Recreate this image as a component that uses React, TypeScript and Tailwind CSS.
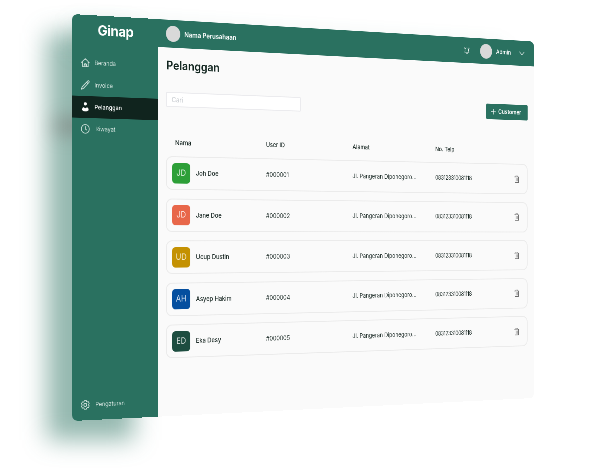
import type { ReactNode } from "react";

function HomeIcon() {
  return (
    <svg viewBox="0 0 24 24" className="h-[20px] w-[20px]" fill="none" stroke="currentColor" strokeWidth="1.9" strokeLinejoin="round" strokeLinecap="round">
      <path d="M1.500 12 12 2.500 22.500 12M4.500 10V21.500h15V10M9 21v-3.500a3 3 0 0 1 6 0V21M9 17.500h6" />
    </svg>
  );
}

function PencilIcon() {
  return (
    <svg viewBox="0 0 24 24" className="h-[20px] w-[20px]" fill="none" stroke="currentColor" strokeWidth="2" strokeLinejoin="round" strokeLinecap="round">
      <path d="M1.500 22.500l2-5.500L18.500 2c1-1 2.200-.7 3 .1.900.9 1 2 .1 3L7 20.500zM15.500 5l3.500 3.500" />
    </svg>
  );
}

function PersonIcon() {
  return (
    <svg viewBox="0 0 24 24" className="h-[20px] w-[20px]" fill="currentColor">
      <circle cx="12" cy="4.500" r="3.800" />
      <path d="M3.500 18.500c0-3.500 2-5.500 4.500-6 1.200 1.600 2.500 2.200 4 2.200s2.800-.6 4-2.200c2.500.5 4.500 2.500 4.500 6 0 2.500-3.500 4-8.500 4s-8.500-1.500-8.500-4z" />
    </svg>
  );
}

function ClockIcon() {
  return (
    <svg viewBox="0 0 24 24" className="h-[20px] w-[20px]" fill="none" stroke="currentColor" strokeWidth="1.9" strokeLinecap="round" strokeLinejoin="round">
      <circle cx="12" cy="12" r="10.500" />
      <path d="M12 6v6.500l3.500 2" />
    </svg>
  );
}

function GearIcon() {
  return (
    <svg viewBox="0 0 24 24" className="h-[20px] w-[20px]" fill="none" stroke="currentColor" strokeWidth="1.900" strokeLinejoin="round">
      <path d="M9.500 1.500h5l.8 2.600 2 1.100 2.600-.6 2.300 4.600-1.800 2v1.600l1.800 2-2.300 4.600-2.600-.6-2 1.100-.8 2.600h-5l-.8-2.600-2-1.100-2.600.6-2.300-4.600 1.800-2v-1.600l-1.800-2 2.300-4.600 2.600.6 2-1.100z" />
      <circle cx="12" cy="12" r="3.800" />
    </svg>
  );
}

function BellIcon() {
  return (
    <svg viewBox="0 0 18 20" className="h-[18px] w-[16px]" fill="none" stroke="currentColor" strokeWidth="1.200" strokeLinecap="round" strokeLinejoin="round">
      <path d="M3.800 11.500V6C5.500 2.800 12.500 2.800 14.200 6v5.500l1.500 3H2.300zM7 17.500c1 1.200 3 1.200 4 0M1.500 4.500l1.500-2M16.500 4.500l-1.500-2" />
    </svg>
  );
}

function TrashIcon() {
  return (
    <svg viewBox="0 0 16 20" className="h-[18px] w-[15px]" fill="none" stroke="#666" strokeWidth="1.200" strokeLinecap="round" strokeLinejoin="round">
      <path d="M1 4.500h14M5 4.500V1.800h6v2.700M2.500 4.500V18.500h11V4.500M6.300 8v7M9.700 8v7" />
    </svg>
  );
}

function NavItem({ icon, label, active = false, indent = "pl-[10px]" }: { icon: ReactNode; label: string; active?: boolean; indent?: string }) {
  return (
    <div className={`flex h-[44.4px] items-center pl-[19px] text-[12px] ${active ? "bg-[#10241e] font-medium text-white" : "text-[#d5e5e0]"}`}>
      {icon}
      <span className={indent}>{label}</span>
    </div>
  );
}

const customers = [
  { initials: "JD", name: "Joh Doe", id: "#000001", tint: "bg-[#2d9f38]" },
  { initials: "JD", name: "Jane Doe", id: "#000002", tint: "bg-[#e8674a]" },
  { initials: "UD", name: "Ucup Dustin", id: "#000003", tint: "bg-[#c49102]" },
  { initials: "AH", name: "Asyep Hakim", id: "#000004", tint: "bg-[#054f9f]" },
  { initials: "ED", name: "Eka Desy", id: "#000005", tint: "bg-[#1d4d40]" },
];

export default function App() {
  return (
    <div className="relative h-[472px] w-[594px] overflow-hidden bg-white font-['Inter','Noto_Sans',sans-serif]">
      <div className="absolute top-[33px] left-[47px] h-[407px] w-[87px] bg-[#2a7160]/50 blur-[12px]" />
      <div className="absolute top-[117px] left-[54px] h-[18px] w-[60px] bg-[#6a5555]/35 blur-[9px]" />
      <div className="absolute top-[22px] left-[72px] h-[30px] w-[430px] origin-top-left rotate-[3.4deg] bg-[#2a7160]/15 blur-[10px]" />
      <div className="relative flex h-[814px] w-[1144px] origin-top-left overflow-hidden rounded-[12px] bg-[#fafafa] will-change-transform [transform:matrix3d(0.469965,0.02918,0,0.00012385,0,0.5,0,0,0,0,1,0,72,14,0,1)]">
        <aside className="flex w-[191px] shrink-0 flex-col bg-[#2a7160]">
          <div className="flex h-[74px] items-start pt-[10px] pl-[56px] text-[29px] leading-[40px] font-bold tracking-[-0.6px] text-white">Ginap</div>
          <NavItem icon={<HomeIcon />} label="Beranda" />
          <NavItem icon={<PencilIcon />} label="Invoice" />
          <NavItem icon={<PersonIcon />} label="Pelanggan" active />
          <NavItem icon={<ClockIcon />} label="Riwayat" indent="pl-[12px]" />
          <div className="mt-auto pb-[9px]">
            <NavItem icon={<GearIcon />} label="Pengaturan" indent="pl-[12px]" />
          </div>
        </aside>
        <div className="flex min-w-0 flex-1 flex-col">
          <header className="flex h-[57px] shrink-0 items-center bg-[#2a7160] pr-[26px] pl-[18px] text-white">
            <div className="h-[33px] w-[33px] rounded-full bg-[#d9d9d9]" />
            <span className="ml-[9px] text-[14px] font-semibold tracking-[-0.1px]">Nama Perusahaan</span>
            <div className="ml-auto flex items-center">
              <BellIcon />
              <div className="ml-[28px] h-[33px] w-[33px] rounded-full bg-[#d9d9d9]" />
              <span className="ml-[11px] w-[64px] text-[13.5px] font-medium">Admin</span>
              <svg viewBox="0 0 16 10" className="h-[10px] w-[16px]" fill="none" stroke="currentColor" strokeWidth="1.400" strokeLinecap="round" strokeLinejoin="round">
                <path d="M1.500 1.500 8 8l6.500-6.500" />
              </svg>
            </div>
          </header>
          <main className="flex flex-col px-[18px] text-[#1b2a26]">
            <h1 className="mt-[20px] pl-px text-[24px] leading-[34px] font-semibold tracking-[0.1px] text-[#10241e]">Pelanggan</h1>
            <div className="mt-[35px] flex h-[35px] items-center justify-between">
              <div className="flex h-[31px] w-[320px] items-center rounded-[3px] border-2 border-[#ebebee] bg-white pl-[11px] text-[14px] text-[#c3c7cc]">Cari</div>
              <button className="flex h-[35px] w-[115px] items-center rounded-[3px] bg-[#2a7160] pl-[14px] text-[13.5px] font-semibold text-white">
                <svg viewBox="0 0 12 12" className="mr-[7px] h-[12px] w-[12px] shrink-0" stroke="currentColor" strokeWidth="1.300">
                  <path d="M6 0v12M0 6h12" />
                </svg>
                Customer
              </button>
            </div>
            <div className="mt-[61px] flex h-[20px] items-center pl-[21px] text-[13px] font-medium">
              <span className="w-[214px] text-[13.500px]">Nama</span>
              <span className="w-[214px]">User ID</span>
              <span className="w-[214px] tracking-[0.1px]">Alamat</span>
              <span className="pl-px">No. Telp</span>
            </div>
            <div className="mt-[18px] flex flex-col gap-[17.5px]">
              {customers.map((c) => (
                <div key={c.id} className="flex h-[69px] items-center rounded-[14px] border-2 border-[#ebebeb] pl-[12px] text-[13px] whitespace-nowrap">
                  <div className={`flex h-[42px] w-[42px] items-center justify-center rounded-[8px] text-[17px] text-white/80 ${c.tint}`}>{c.initials}</div>
                  <span className="ml-[13px] w-[166px] text-[13.5px] font-medium tracking-[-0.1px]">{c.name}</span>
                  <span className="w-[214px] text-[13.5px] tracking-[-0.2px]">{c.id}</span>
                  <span className="w-[214px] tracking-[0.08px]">Jl. Pangeran Diponegoro...</span>
                  <span className="w-[216px] pl-px text-[13px] tracking-[-0.6px]">083123310081118</span>
                  <TrashIcon />
                </div>
              ))}
            </div>
          </main>
        </div>
      </div>
    </div>
  );
}
